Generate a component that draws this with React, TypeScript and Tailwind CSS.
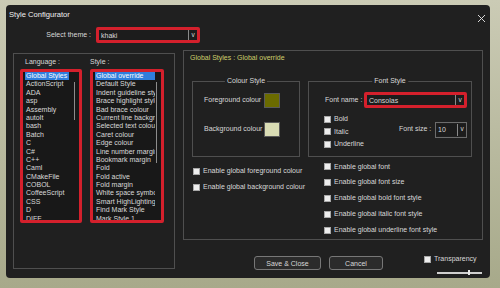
import React from 'react';

const languages = [
  'Global Styles', 'ActionScript', 'ADA', 'asp', 'Assembly', 'autoIt', 'bash', 'Batch', 'C', 'C#', 'C++', 'Caml',
  'CMakeFile', 'COBOL', 'CoffeeScript', 'CSS', 'D', 'DIFF',
];

const styles = [
  'Global override', 'Default Style', 'Indent guideline style', 'Brace highlight style', 'Bad brace colour',
  'Current line background', 'Selected text colour', 'Caret colour', 'Edge colour', 'Line number margin',
  'Bookmark margin', 'Fold', 'Fold active', 'Fold margin', 'White space symbol', 'Smart HighLighting',
  'Find Mark Style', 'Mark Style 1',
];

function Check({ label }: { label: string }) {
  return (
    <div className="flex h-full items-center gap-[3px] whitespace-nowrap">
      <span className="h-[7px] w-[7px] shrink-0 border border-[#a8a8a8] bg-[#ededed]" />
      <span>{label}</span>
    </div>
  );
}

function Combo({ value, width, red }: { value: string; width: string; red?: boolean }) {
  return (
    <div className={`${width} flex h-[16px] ${red ? 'rounded-[2px] border-[3px] border-[#d4202c]' : 'border border-[#6c6c6c] py-[1px]'}`}>
      <div className="flex flex-1 items-center bg-[#1c1c1c] pl-[2px] leading-none">{value}</div>
      <div className="flex w-[9px] items-center justify-center border-l border-[#8a8a8a] bg-[#1c1c1c] text-[6.5px] leading-none">v</div>
    </div>
  );
}

function ListBox({ items, width, selWidth, scroll }: { items: string[]; width: string; selWidth: string; scroll: string }) {
  return (
    <div className={`${width} relative h-[154px] overflow-hidden rounded-[2px] border-[3px] border-[#d4202c] bg-[#181818] pl-[2px]`}>
      {items.map((item, i) => (
        <div
          key={item}
          className={`${selWidth} h-[8.4px] overflow-hidden whitespace-nowrap pl-[1px] leading-[8.4px] ${i === 0 ? 'bg-[#2f7edc] text-white' : ''}`}
        >
          {item}
        </div>
      ))}
      <div className={`absolute right-[4px] top-[10px] w-[1.5px] bg-[#8c8c8c] ${scroll}`} />
    </div>
  );
}

export default function App() {
  return (
    <div
      className="h-[288px] w-[500px] overflow-hidden bg-gradient-to-b from-[#cbcbb5] to-[#a7a98a] pl-[6px] pt-[5px] text-[7px] text-[#d8d8d8]"
      style={{ fontFamily: '"Liberation Sans", Arial, sans-serif' }}
    >
      <div className="flex h-[273px] w-[484px] flex-col rounded-[4px] bg-[#202020]">
        {/* title */}
        <div className="flex h-[18px] items-center justify-between pl-[3px] pr-[4px]">
          <span className="mt-[1px] text-[7.6px] text-[#f0f0f0]">Style Configurator</span>
          <svg width="9" height="9" viewBox="0 0 9 9" className="mt-[8px]">
            <path d="M1 1L8 8M8 1L1 8" stroke="#d8d8d8" strokeWidth="1" />
          </svg>
        </div>

        {/* theme */}
        <div className="mt-[4px] flex h-[16px] items-center">
          <span className="w-[85px] text-right">Select theme :</span>
          <div className="ml-[5px]">
            <Combo value="khaki" width="w-[104px]" red />
          </div>
        </div>

        <div className="mt-[7px] flex items-start">
          {/* left group */}
          <div className="ml-[7px] mt-[3px] h-[216px] w-[162px] border border-[#4f4f4f] pl-[6px]">
            <div className="mt-[4px] flex h-[8px] items-center leading-[8px]">
              <span className="w-[70px] pl-[5px]">Language :</span>
              <span>Style :</span>
            </div>
            <div className="mt-[3px] flex gap-[8px]">
              <ListBox items={languages} width="w-[62px]" selWidth="w-[44px]" scroll="h-[38px]" />
              <ListBox items={styles} width="w-[74px]" selWidth="w-[60px]" scroll="h-[81px]" />
            </div>
          </div>

          {/* right column */}
          <div className="ml-[8px] flex w-[300px] flex-col">
            <div className="h-[190px] border border-[#4f4f4f]">
              <div className="ml-[6px] mt-[3px] h-[8px] leading-[8px] text-[#cfcf6c]">Global Styles : Global override</div>

              <div className="ml-[8px] mt-[19px] flex gap-[8px]">
                {/* colour style */}
                <div className="relative h-[76px] w-[108px] border border-[#4f4f4f] pl-[11px] pt-[11px]">
                  <span className="absolute -top-[5px] left-1/2 -translate-x-1/2 whitespace-nowrap bg-[#202020] px-[2px] leading-[8px]">Colour Style</span>
                  <div className="flex h-[15px] items-center">
                    <span className="w-[60px]">Foreground colour</span>
                    <span className="h-[15px] w-[16px] border border-[#5a5a5a] bg-[#6b6b00]" />
                  </div>
                  <div className="mt-[14px] flex h-[15px] items-center">
                    <span className="w-[60px]">Background colour</span>
                    <span className="h-[15px] w-[16px] border border-[#5a5a5a] bg-[#d9dcb4]" />
                  </div>
                </div>

                {/* font style */}
                <div className="relative h-[76px] w-[164px] border border-[#4f4f4f] pl-[15px] pt-[10px]">
                  <span className="absolute -top-[5px] left-1/2 -translate-x-1/2 whitespace-nowrap bg-[#202020] px-[2px] leading-[8px]">Font Style</span>
                  <div className="flex items-center">
                    <span className="w-[40px] pl-[1px]">Font name :</span>
                    <Combo value="Consolas" width="w-[103px]" red />
                  </div>
                  <div className="mt-[5px] flex">
                    <div className="flex w-[75px] flex-col">
                      <div className="h-[12.5px]"><Check label="Bold" /></div>
                      <div className="h-[12.5px]"><Check label="Italic" /></div>
                      <div className="h-[12.5px]"><Check label="Underline" /></div>
                    </div>
                    <div className="mt-[9px] flex h-[15px] items-center">
                      <span className="w-[36px]">Font size :</span>
                      <Combo value="10" width="w-[32px]" />
                    </div>
                  </div>
                </div>
              </div>

              {/* enable options */}
              <div className="flex">
                <div className="mt-[6px] flex w-[125px] flex-col pl-[9px]">
                  <div className="h-[16px]"><Check label="Enable global foreground colour" /></div>
                  <div className="h-[16px]"><Check label="Enable global background colour" /></div>
                </div>
                <div className="mt-[2px] flex flex-col pl-[15px]">
                  <div className="h-[15.8px]"><Check label="Enable global font" /></div>
                  <div className="h-[15.8px]"><Check label="Enable global font size" /></div>
                  <div className="h-[15.8px]"><Check label="Enable global bold font style" /></div>
                  <div className="h-[15.8px]"><Check label="Enable global italic font style" /></div>
                  <div className="h-[15.8px]"><Check label="Enable global underline font style" /></div>
                </div>
              </div>
            </div>

            {/* buttons */}
            <div className="mt-[15px] flex items-start">
              <button className="ml-[71px] mt-[1px] flex h-[14px] w-[67px] items-center justify-center rounded-[3px] border border-[#777] bg-[#2b2b2b] leading-none">
                Save &amp; Close
              </button>
              <button className="ml-[8px] mt-[1px] flex h-[14px] w-[54px] items-center justify-center rounded-[3px] border border-[#777] bg-[#2b2b2b] leading-none">
                Cancel
              </button>
              <div className="ml-[41px] flex flex-col">
                <div className="h-[8px]"><Check label="Transparency" /></div>
                <div className="relative ml-[13px] mt-[9px] h-[1.5px] w-[45px] bg-[#cfcfcf]">
                  <span className="absolute -top-[2px] left-[31px] h-[5px] w-[2px] bg-[#e8e8e8]" />
                </div>
              </div>
            </div>
          </div>
        </div>
      </div>
    </div>
  );
}
